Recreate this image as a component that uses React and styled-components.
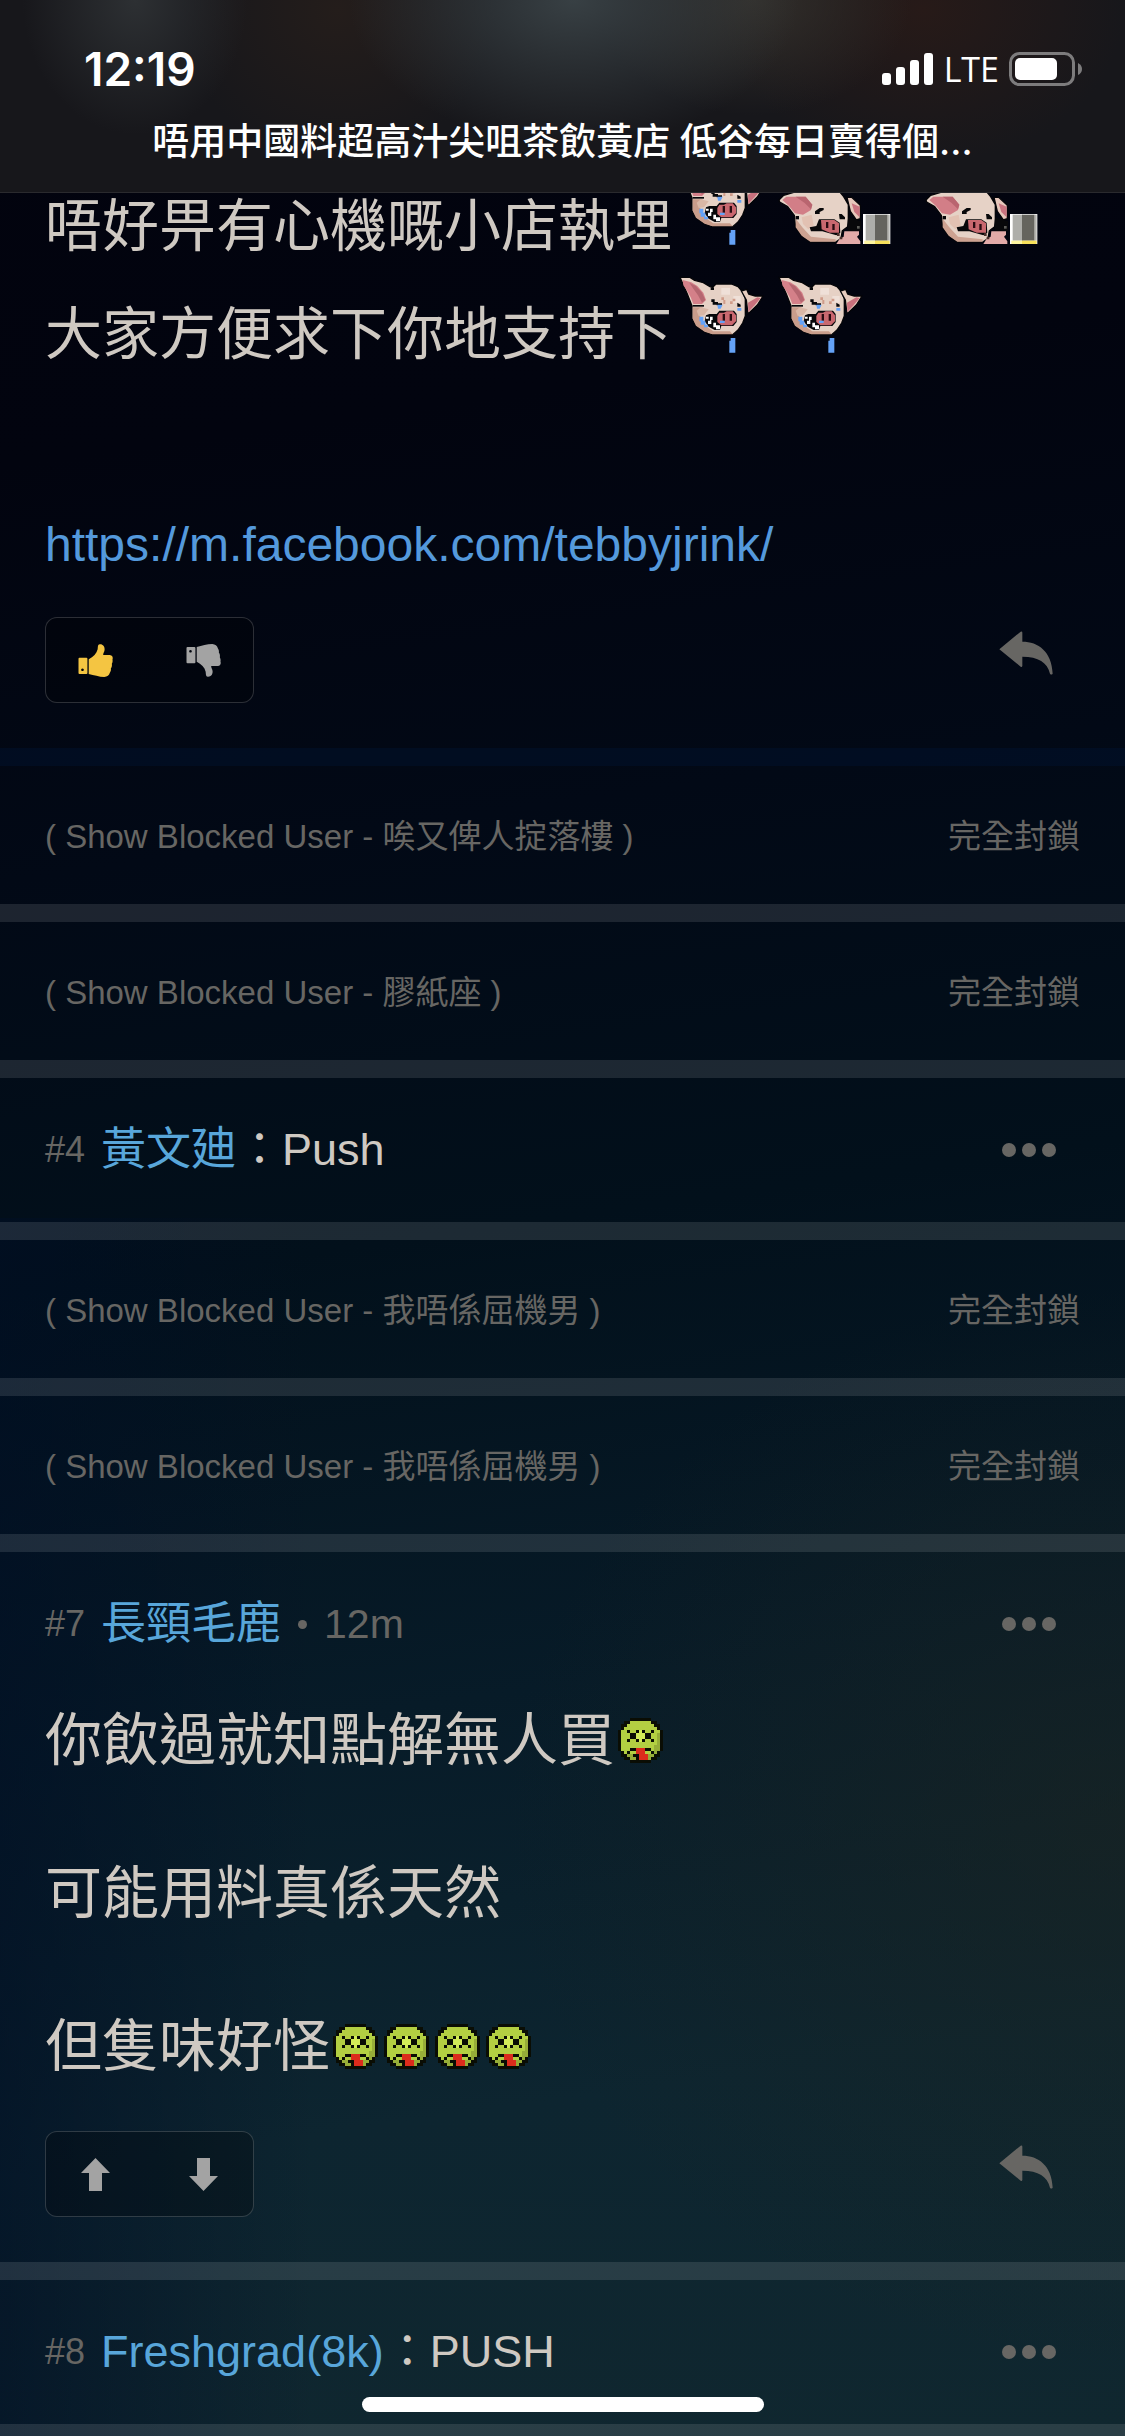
import React from "react";
import styled, { createGlobalStyle } from "styled-components";

const blockedLabel = "完全封鎖";

const App = () => {
  return (
    <Screen>
      <GlobalStyle />
      <Header>
        <StatusBar>
          <Time>12:19</Time>
          <StatusIcons>
            <SignalIcon />
            <Network>LTE</Network>
            <BatteryIcon />
          </StatusIcons>
        </StatusBar>
        <Title>唔用中國料超高汁尖咀茶飲黃店 低谷每日賣得個…</Title>
      </Header>
      <Thread>
        <FirstPost>
          <TallLine>
            <TallText>唔好畀有心機嘅小店執埋</TallText>
            <CryPig />
            <DrinkPig />
            <DrinkPig />
          </TallLine>
          <TallLine>
            <TallText>大家方便求下你地支持下</TallText>
            <CryPig />
            <CryPig />
          </TallLine>
          <PostLink href="https://m.facebook.com/tebbyjrink/">
            https://m.facebook.com/tebbyjrink/
          </PostLink>
          <Actions first={<ThumbIcon color="#f4c542" />} second={<ThumbIcon color="#a3a3a3" down />} />
        </FirstPost>
        <Divider $dark />
        <BlockedUser name="唉又俾人掟落樓" />
        <Divider />
        <BlockedUser name="膠紙座" />
        <Divider />
        <ShortPost number="#4" name="黃文廸" text="Push" />
        <Divider />
        <BlockedUser name="我唔係屈機男" />
        <Divider />
        <BlockedUser name="我唔係屈機男" />
        <Divider />
        <article>
          <PostHead>
            <Number>#7</Number>
            <UserName href="#user">長頸毛鹿</UserName>
            <Bullet />
            <Ago>12m</Ago>
            <MoreButton aria-label="More">
              <DotsIcon />
            </MoreButton>
          </PostHead>
          <Body>
            <Line>
              你飲過就知點解無人買
              <SickFace />
            </Line>
            <Line>可能用料真係天然</Line>
            <Line>
              但隻味好怪
              <SickFace />
              <SickFace />
              <SickFace />
              <SickFace />
            </Line>
          </Body>
          <Actions first={<ArrowIcon />} second={<ArrowIcon down />} />
        </article>
        <Divider />
        <ShortPost number="#8" name="Freshgrad(8k)" text="PUSH" />
        <Divider />
      </Thread>
      <HomeIndicator />
    </Screen>
  );
};
export default App;

const BlockedUser = ({ name }) => (
  <BlockedRow>
    <BlockedButton>( Show Blocked User - {name} )</BlockedButton>
    <BlockedButton>{blockedLabel}</BlockedButton>
  </BlockedRow>
);

const ShortPost = ({ number, name, text }) => (
  <PostHead>
    <Number>{number}</Number>
    <UserName href="#user">{name}</UserName>
    <Message>：{text}</Message>
    <MoreButton aria-label="More">
      <DotsIcon />
    </MoreButton>
  </PostHead>
);

const Actions = ({ first, second }) => (
  <ActionRow>
    <VoteBox>
      <VoteButton aria-label="Upvote">{first}</VoteButton>
      <VoteButton aria-label="Downvote">{second}</VoteButton>
    </VoteBox>
    <ReplyButton aria-label="Reply">
      <svg width="54" height="44" viewBox="117 94 162 132" fill="#676663">
        <path d="M118 149 L182 96 Q187 94 187 99 V126 C235 126 275 155 278 222 Q274 227 270 222 C262 188 235 171 187 171 V199 Q186 203 182 201 Z" />
      </svg>
    </ReplyButton>
  </ActionRow>
);

/////// icons

const SignalIcon = () => (
  <svg width="52" height="32" viewBox="0 0 52 32" fill="#fff">
    <rect x="0" y="20" width="9" height="12" rx="3" />
    <rect x="14" y="14" width="9" height="18" rx="3" />
    <rect x="28" y="7" width="9" height="25" rx="3" />
    <rect x="42" y="0" width="9" height="32" rx="3" />
  </svg>
);

const BatteryIcon = () => (
  <svg width="74" height="34" viewBox="0 0 74 34">
    <rect x="1.5" y="1.5" width="63" height="31" rx="9" fill="none" stroke="#7d7c7d" strokeWidth="3" />
    <rect x="6" y="6" width="42" height="22" rx="5" fill="#fff" />
    <path d="M69 11 Q73 13 73 17 Q73 21 69 23 Z" fill="#7d7c7d" />
  </svg>
);

const DotsIcon = () => (
  <svg width="56" height="16" viewBox="0 0 56 16" fill="#676663">
    <circle cx="8" cy="8" r="7" />
    <circle cx="28" cy="8" r="7" />
    <circle cx="48" cy="8" r="7" />
  </svg>
);

const ThumbIcon = ({ color, down }) => (
  <svg width="35" height="33" viewBox="237 134 105 100" fill={color}>
    <g transform={down ? "translate(0 368) scale(1 -1)" : undefined}>
      <path
        fillRule="evenodd"
        d="M241 176 H262 Q265 176 265 179 V222 Q265 225 262 225 H241 Q238 225 238 222 V179 Q238 176 241 176 Z M250 208 a4 4 0 1 0 0.1 0 Z"
      />
      <path d="M269 180 C283 173 293 163 296 150 C297 142 296 136 302 135 C313 134 318 143 317 152 C316 159 312 163 313 167 H333 C341 168 343 175 341 181 C342 187 341 190 339 194 C340 200 339 204 336 208 C337 214 335 217 333 221 C331 229 325 233 316 234 C300 234 285 228 269 225 Z" />
    </g>
  </svg>
);

const ArrowIcon = ({ down }) => (
  <svg width="35" height="33" viewBox="0 0 35 33" fill="#a3a3a3">
    <path d={down ? "M11 0 H24 V18 H32 L17.5 33 L3 18 H11 Z" : "M11 33 H24 V15 H32 L17.5 0 L3 15 H11 Z"} />
  </svg>
);

/////// stickers

const sickPixels = [
  "....#######....",
  "..##ggggggg##..",
  ".##ggggggggg##.",
  ".#ggggggggggg#.",
  "#gg#gg#l#gg#gg#",
  "#ggg##lll##ggd#",
  "#ggg##lll##ggd#",
  "#gg#gg#l#gg#gd#",
  "#ggggggggggggd#",
  "#gggggggggggdd#",
  "#ggg##rrr##gdd#",
  ".#g#ggrrrgg#d#.",
  ".##dd##rrrdd##.",
  "..##dd#rrrd##..",
  "....#######....",
];
const sickColors = { "#": "#0a0d04", g: "#b3cf42", l: "#d3ec58", d: "#97ad38", r: "#dc2c1c" };

const SickFace = () => (
  <Sticker width="51" height="45" viewBox="-1 0 17 15" shapeRendering="crispEdges">
    {sickPixels.map((row, y) =>
      row.split("").map((c, x) =>
        c === "." ? null : <rect key={`${x}-${y}`} x={x} y={y} width="1" height="1" fill={sickColors[c]} />
      )
    )}
  </Sticker>
);

const CryPig = () => (
  <Sticker width="99" height="84" viewBox="0 0 297 252">
    <g stroke="#050508" strokeWidth="4" strokeLinejoin="round">
      <path d="M12 16 H42 L56 25 L82 32 L102 44 L110 46 L120 36 H166 L186 44 L200 60 L208 80 V132 L200 153 L186 174 L170 188 H109 L86 180 L60 162 L48 140 V102 L34 66 Z" fill="#e6d1c5" />
      <path d="M196 57 L212 52 L218 66 L238 72 H261 L244 99 L216 126 L211 84 Z" fill="#e8cdbf" />
    </g>
    <path d="M20 24 L46 31 L64 42 L82 62 L90 84 L78 96 H52 L44 76 L34 58 L22 40 Z" fill="#d48089" />
    <path d="M40 32 L60 42 L78 62 L88 84 L78 92 L66 70 L52 50 Z" fill="#b56670" />
    <path d="M50 106 H80 L70 128 L92 164 L112 178 H162 L170 187 H109 L86 179 L60 161 L50 140 Z" fill="#c99d8b" />
    <path d="M74 106 L98 112 L84 130 L68 132 L62 116 Z" fill="#d9b7a6" />
    <path d="M216 92 L244 76 L254 78 L236 100 L217 120 Z" fill="#c9717d" />
    <path d="M136 48 H162 V68 H136 Z M172 72 H194 V92 H172 Z" fill="#efe0d8" />
    <path d="M136 76 h8 v8 h-8 Z M142 84 h6 v12 h-6 Z M170 80 h8 v8 h-8 Z M162 88 h8 v8 h-8 Z" fill="#cf9c8a" />
    <g fill="#07070a">
      <path d="M104 46 h10 v8 h-10 Z" />
      <path d="M50 99 H84 V104 H50 Z" />
      <path d="M106 82 H116 V90 H126 V94 H138 V100 H122 V98 H110 V90 H106 Z" />
      <path d="M184 92 L194 98 V104 H184 Z" />
      <path d="M90 130 L100 126 H122 L130 116 H174 L182 126 V150 L172 162 H136 L132 174 H116 L98 164 L86 148 Z" />
    </g>
    <path d="M130 122 H144 L152 118 H170 L180 130 V148 L168 160 H136 L124 150 V132 Z" fill="#c9686f" />
    <path d="M140 126 h7 v20 h-7 Z M161 126 h7 v20 h-7 Z" fill="#2a0c12" />
    <path d="M90 134 h8 v6 h-8 Z M102 134 h8 v10 h-4 v12 h-10 v-10 h6 Z M112 152 h8 v8 h12 v12 h-12 v-6 h-8 Z" fill="#fff" />
    <g fill="#64a2f7">
      <path d="M70 134 h12 v12 h6 v12 h8 v8 h-12 v-8 h-10 v-10 h-4 Z" />
      <path d="M124 98 h16 l-6 12 h-8 Z M184 108 h12 v8 h-12 Z M132 146 h14 v7 h-14 Z" />
      <path d="M164 198 H178 V242 H160 V206 H164 Z" />
    </g>
  </Sticker>
);

const DrinkPig = () => (
  <Sticker width="147" height="84" viewBox="0 -60 441 252">
    <path
      d="M12 48 L26 34 L60 24 L64 18 H100 L108 24 L124 16 H188 L206 38 L220 62 V104 L218 128 L202 140 L198 164 L182 174 H106 L80 156 L62 130 L58 94 L38 68 L14 54 Z"
      fill="#e6d2c6"
      stroke="#050508"
      strokeWidth="4"
      strokeLinejoin="round"
    />
    <path d="M216 40 H230 L256 64 V104 L244 108 L226 82 Z" fill="#e6c7bb" stroke="#050508" strokeWidth="4" />
    <path d="M230 58 L254 68 V100 L238 84 Z" fill="#ca7480" />
    <path d="M22 48 L34 38 L92 38 L112 62 L108 78 L84 92 L60 88 L42 66 Z" fill="#d27e87" />
    <path d="M62 38 H92 L112 62 L108 76 L88 56 Z" fill="#b9656f" />
    <path d="M62 104 L82 130 L108 158 L182 166 V173 H106 L80 155 L62 130 Z" fill="#cda291" />
    <path d="M80 100 L110 92 L116 124 L100 136 L84 120 Z" fill="#e2c1b2" />
    <g fill="#08080a">
      <path d="M62 96 h10 v10 h-10 Z" />
      <path d="M120 82 L134 72 H146 V78 L134 84 V90 H120 Z" />
      <path d="M192 90 H200 L210 100 V106 H194 Z" />
      <path d="M104 130 L124 126 L132 106 H178 L194 116 L196 146 L184 154 L142 142 L108 142 Z" />
      <path d="M220 100 L258 112 V142 L218 140 Z" />
    </g>
    <path d="M138 108 H178 L192 118 V146 H164 L140 136 Z" fill="#c9686f" />
    <path d="M153 114 h7 v18 h-7 Z M172 120 h7 v18 h-7 Z" fill="#2a0c12" />
    <path d="M208 142 H252 V152 L246 158 L256 172 V180 H184 L194 164 L206 158 Z" fill="#e2aaa8" />
    <path d="M186 148 h8 v8 h-8 Z M194 158 h8 v8 h-8 Z" fill="#4a302c" />
    <path d="M246 126 h8 v8 h-8 Z" fill="#5c5c58" />
    <path d="M264 90 H346 V180 H264 Z" fill="#fff" />
    <path d="M272 92 H302 V170 H272 Z" fill="#aeaeaa" />
    <path d="M300 92 H338 V170 H300 Z" fill="#65645e" />
    <path d="M338 92 H344 V170 H338 Z" fill="#b5b5b0" />
    <path d="M268 170 H300 V180 H268 Z" fill="#fdf5a0" />
    <path d="M300 170 H344 V180 H300 Z" fill="#f7e05a" />
  </Sticker>
);

/////// styles

const GlobalStyle = createGlobalStyle`
  * {
    box-sizing: border-box;
  }
  body {
    margin: 0;
    background: #020510;
    font-family: "Liberation Sans", "Noto Sans CJK TC", sans-serif;
  }
  button {
    padding: 0;
    border: none;
    background: none;
    font-family: inherit;
    cursor: pointer;
  }
  a {
    text-decoration: none;
  }
  svg {
    display: block;
    flex-shrink: 0;
  }
`;

const Screen = styled.div`
  position: relative;
  height: 100vh;
  overflow: hidden;
  display: flex;
  flex-direction: column;
  background:
    linear-gradient(90deg, rgba(0, 14, 36, 0.6), rgba(0, 14, 36, 0) 28%) 0 100% / 100% 50% no-repeat,
    radial-gradient(ellipse 55% 22% at 100% 75%, rgba(28, 36, 32, 0.6), rgba(28, 36, 32, 0)),
    linear-gradient(172deg, #02030e 0%, #02040f 18%, #020916 34%, #02101b 50%, #071b28 68%, #0d2530 84%, #10272f 100%);
`;

const Header = styled.header`
  flex-shrink: 0;
  height: 193px;
  padding-top: 44px;
  border-bottom: 1px solid #2a2a2e;
  background:
    radial-gradient(ellipse 20% 75% at 51% 0%, #384044, rgba(56, 64, 68, 0)),
    radial-gradient(ellipse 10% 70% at 12% 0%, #2d3033, rgba(45, 48, 51, 0)),
    radial-gradient(ellipse 14% 60% at 67% 0%, #322f2b, rgba(50, 47, 43, 0)),
    radial-gradient(ellipse 18% 80% at 82% 5%, #271a18, rgba(39, 26, 24, 0)),
    radial-gradient(ellipse 14% 80% at 30% 5%, #241d1b, rgba(36, 29, 27, 0)),
    #17171b;
  color: #fff;
`;

const StatusBar = styled.div`
  display: flex;
  justify-content: space-between;
  align-items: center;
  height: 50px;
  padding: 0 42px 0 84px;
`;

const Time = styled.span`
  font-family: Inter, sans-serif;
  font-size: 46px;
  font-weight: 600;
  line-height: 50px;
`;

const StatusIcons = styled.div`
  display: flex;
  align-items: center;
  gap: 10px;
`;

const Network = styled.span`
  font-family: "Open Sans", sans-serif;
  font-size: 34px;
  font-weight: 500;
  line-height: 50px;
`;

const Title = styled.h1`
  margin: 0;
  padding: 0 120px;
  font-family: Inter, "Noto Sans CJK TC", sans-serif;
  font-size: 37px;
  font-weight: 500;
  line-height: 96px;
  text-align: center;
  white-space: nowrap;
`;

const Thread = styled.main`
  flex: 1;
  min-height: 0;
  overflow: hidden;
`;

// scrolled so the first line sits partly under the header
const FirstPost = styled.article`
  margin-top: -29px;
`;

const TallLine = styled.div`
  display: flex;
  align-items: flex-start;
  height: 108px;
  padding-left: 45px;
`;

const TallText = styled.span`
  padding: 14px 4px 0 0;
  color: #cfc9c2;
  font-size: 57px;
  line-height: 96px;
  white-space: nowrap;
`;

const Sticker = styled.svg`
  display: block;
`;

const PostLink = styled.a`
  display: block;
  margin: 127px 45px 34px;
  color: #5499dc;
  font-size: 48px;
  line-height: 76px;
`;

const ActionRow = styled.div`
  display: flex;
  justify-content: space-between;
  align-items: flex-start;
  padding: 0 45px 45px;
`;

const VoteBox = styled.div`
  display: flex;
  gap: 73px;
  height: 86px;
  padding: 0 32px;
  border: 1px solid rgba(255, 255, 255, 0.17);
  border-radius: 12px;
  background: rgba(0, 0, 0, 0.25);
`;

const VoteButton = styled.button`
  display: flex;
  align-items: center;
`;

const ReplyButton = styled.button`
  display: flex;
  justify-content: center;
  align-items: center;
  width: 108px;
  height: 72px;
`;

const Divider = styled.div`
  height: 18px;
  background: ${(props) => (props.$dark ? "rgba(0, 24, 56, 0.35)" : "rgba(255, 255, 255, 0.11)")};
`;

const BlockedRow = styled.div`
  display: flex;
  justify-content: space-between;
  align-items: center;
  height: 138px;
  padding: 3px 45px 0;
`;

const BlockedButton = styled.button`
  color: #676663;
  font-size: 33px;
  line-height: 48px;
`;

const PostHead = styled.div`
  display: flex;
  align-items: center;
  height: 144px;
  padding: 0 45px;
  line-height: 60px;
`;

const Number = styled.span`
  margin-right: 16px;
  color: #676663;
  font-size: 36px;
`;

const UserName = styled.a`
  color: #58a6da;
  font-size: 45px;
`;

const Message = styled.span`
  margin-left: 1px;
  color: #cfc9c2;
  font-size: 45px;
`;

const Bullet = styled.span`
  width: 9px;
  height: 9px;
  margin: 0 17px;
  border-radius: 50%;
  background: #676663;
`;

const Ago = styled.span`
  color: #676663;
  font-size: 41px;
`;

const MoreButton = styled.button`
  display: flex;
  justify-content: center;
  width: 102px;
  margin-left: auto;
`;

const Body = styled.div`
  display: flex;
  flex-direction: column;
  gap: 69px;
  padding: 2px 45px 43px;
`;

const Line = styled.p`
  display: flex;
  align-items: center;
  margin: 0;
  color: #cfc9c2;
  font-size: 57px;
  line-height: 84px;
`;

const HomeIndicator = styled.div`
  position: absolute;
  bottom: 24px;
  left: 50%;
  width: 402px;
  height: 15px;
  margin-left: -201px;
  border-radius: 8px;
  background: #fff;
`;
